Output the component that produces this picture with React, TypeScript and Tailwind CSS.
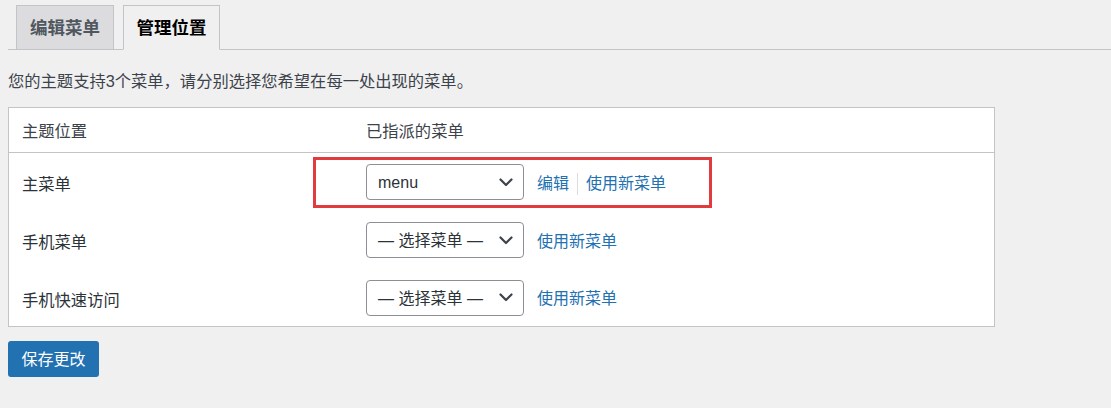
import React from 'react';

const font = { fontFamily: '"Liberation Sans", "Noto Sans CJK SC", sans-serif' };

const Chevron = () => (
  <svg width="14" height="9" viewBox="0 0 14 9" className="shrink-0">
    <path d="M1.5 1.5 L7 7 L12.5 1.5" fill="none" stroke="#3c434a" strokeWidth="2.2" strokeLinecap="round" strokeLinejoin="round" />
  </svg>
);

const Select = ({ label }: { label: string }) => (
  <div className="flex h-[36px] w-[158px] items-center justify-between rounded-[4px] border border-[#8c8f94] bg-white pl-[11px] pr-[10px] text-[16px] text-[#2c3338]">
    <span className="whitespace-nowrap pt-[2px]">{label}</span>
    <Chevron />
  </div>
);

const rows = [
  { name: '主菜单', value: 'menu', edit: true, h: 'h-[58px]' },
  { name: '手机菜单', value: '— 选择菜单 —', edit: false, h: 'h-[58px]' },
  { name: '手机快速访问', value: '— 选择菜单 —', edit: false, h: 'h-[57px]' },
];

export default function App() {
  return (
    <div className="relative min-h-[408px] w-[1111px] bg-[#f0f0f1] pl-[8px] pt-[5px]" style={font}>
      <div className="flex h-[45px] items-end gap-[9px] border-b border-[#c3c4c7] pl-[8px]">
        <div className="-mb-px flex h-[45px] w-[98px] items-center justify-center border border-[#c3c4c7] bg-[#dcdcde] pt-[2px] text-[17.5px] font-bold text-[#50575e]">
          编辑菜单
        </div>
        <div className="-mb-px flex h-[45px] w-[97px] items-center justify-center border border-b-[#f0f0f1] border-[#c3c4c7] bg-[#f0f0f1] pt-[2px] text-[17.5px] font-bold text-black">
          管理位置
        </div>
      </div>

      <p className="mt-[21px] text-[16.3px] leading-[20px] text-[#3c434a]">
        您的主题支持3个菜单，请分别选择您希望在每一处出现的菜单。
      </p>

      <div className="relative mt-[16px] w-[987px] border border-[#c3c4c7] bg-white text-[16.3px] text-[#3c434a]">
        <div className="flex h-[45px] items-center border-b border-[#c3c4c7] pt-[3px]">
          <div className="w-[357px] pl-[13px]">主题位置</div>
          <div>已指派的菜单</div>
        </div>
        {rows.map((r) => (
          <div key={r.name} className={`flex items-center ${r.h}`}>
            <div className="w-[357px] pl-[13px] pt-[5px] text-[#2c3338]">{r.name}</div>
            <Select label={r.value} />
            <div className="ml-[13px] flex items-center pt-[3px] text-[16px] text-[#2271b1]">
              {r.edit && (
                <>
                  <span>编辑</span>
                  <span className="mx-[8px] h-[22px] w-px bg-[#dcdcde]" />
                </>
              )}
              <span>使用新菜单</span>
            </div>
          </div>
        ))}
        <div className="pointer-events-none absolute left-[304px] top-[49px] h-[51px] w-[399px] border-[3px] border-[#e23b3f]" />
      </div>

      <button className="mt-[14px] flex h-[36px] w-[91px] items-center justify-center rounded-[3px] bg-[#2271b1] pt-[2px] text-[16px] text-white">
        保存更改
      </button>
    </div>
  );
}
